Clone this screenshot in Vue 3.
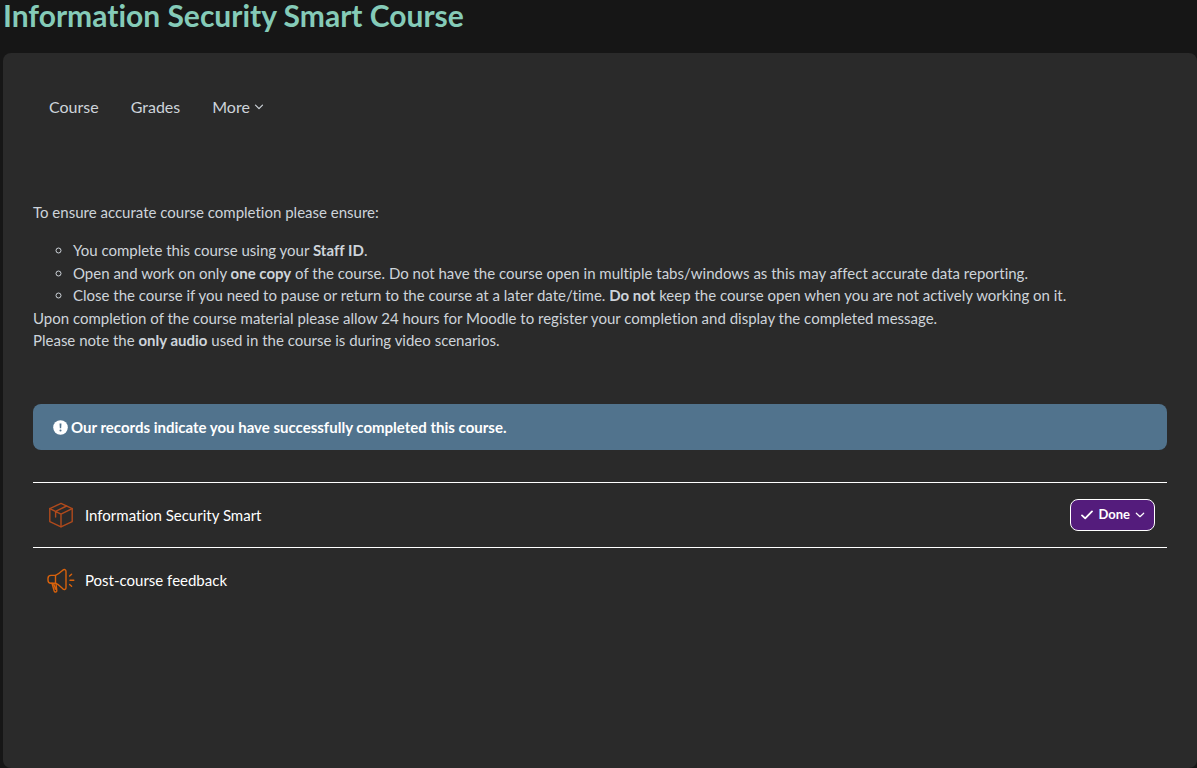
<script setup>
const tabs = ['Course', 'Grades']
</script>

<template>
  <div class="page">
    <h1>Information Security Smart Course</h1>
    <main class="panel">
      <nav class="tabs" aria-label="Course navigation">
        <a v-for="tab in tabs" :key="tab" href="#">{{ tab }}</a>
        <button type="button" class="more">
          More
          <svg class="chevron" viewBox="0 0 10 10" aria-hidden="true"><path d="M1.5 3.2 5 6.7 8.5 3.2" /></svg>
        </button>
      </nav>

      <section class="intro">
        <p class="lead">To ensure accurate course completion please ensure:</p>
        <ul>
          <li>You complete this course using your <strong>Staff ID</strong>.</li>
          <li>Open and work on only <strong>one copy</strong> of the course. Do not have the course open in multiple tabs/windows as this may affect accurate data reporting.</li>
          <li>Close the course if you need to pause or return to the course at a later date/time. <strong>Do not</strong> keep the course open when you are not actively working on it.</li>
        </ul>
        <p>Upon completion of the course material please allow 24 hours for Moodle to register your completion and display the completed message.</p>
        <p>Please note the <strong>only audio</strong> used in the course is during video scenarios.</p>
      </section>

      <div class="notice" role="status">
        <svg viewBox="0 0 16 16" aria-hidden="true">
          <circle cx="8" cy="8" r="7.8" fill="#fff" />
          <path d="M7 3.6h2l-.3 5.2H7.3z" fill="#51738d" />
          <circle cx="8" cy="11.2" r="1.1" fill="#51738d" />
        </svg>
        <span>Our records indicate you have successfully completed this course.</span>
      </div>

      <ul class="activities">
        <li>
          <svg class="icon package" viewBox="0 0 28 28" aria-hidden="true">
            <path d="M14 2.4 25.2 7.6v13L14 25.8 2.8 20.6v-13z" />
            <path d="M2.8 7.6 14 13.2 25.2 7.6M14 13.2v12.6M8.600 16v-5.600L19.600 5" />
          </svg>
          <a href="#">Information Security Smart</a>
          <button type="button" class="done">
            <svg class="check" viewBox="0 0 12 12" aria-hidden="true"><path d="M1 6.4 4.2 9.4 11 2.4" /></svg>
            Done
            <svg class="chevron" viewBox="0 0 10 10" aria-hidden="true"><path d="M1.3 3.2 5 6.7 8.7 3.2" /></svg>
          </button>
        </li>
        <li>
          <svg class="icon horn" viewBox="0 0 28 28" aria-hidden="true">
            <path d="M8.500 9.400H4A3 3 0 0 0 1 12.400v1.800a3 3 0 0 0 3 3h4.500z" />
            <path d="M8.500 9.400c3.200-1 5-3.200 7.200-5.200 1.600-1.400 3.300-.8 3.300 1.400v15.800c0 2.200-1.700 2.800-3.300 1.400-2.200-2-4-4.400-7.200-5.600" />
            <path d="M5 17.200 7.200 25c.5 1.500 2.800 1.300 2.600-.4L9 17.500M6.600 17.600l2 5.600" />
            <path d="M23 14.200h3.800M22.600 10l2-1.800M22.600 18.400l2 1.800" />
          </svg>
          <a href="#">Post-course feedback</a>
        </li>
      </ul>
    </main>
  </div>
</template>

<style>
html,
body {
  margin: 0;
  background: #161616;
}
</style>

<style scoped>
* {
  box-sizing: border-box;
}
.page {
  min-height: 100vh;
  display: flex;
  flex-direction: column;
  padding-left: 3px;
  background: #161616;
  color: #ced4da;
  font: 15px/1.5 Lato, sans-serif;
  font-variant-ligatures: none;
}
h1 {
  margin: 0;
  padding-bottom: 23px;
  color: #85cbb8;
  font-size: 30px;
  line-height: 30px;
  font-weight: 700;
}
.panel {
  flex: 1;
  padding: 30px;
  border-radius: 8px;
  background: #2a2a2a;
}
a {
  color: inherit;
  text-decoration: none;
}
button {
  font: inherit;
  color: inherit;
  cursor: pointer;
}
.tabs {
  display: flex;
  align-items: center;
  height: 48px;
  font-size: 16px;
}
.tabs a,
.more {
  padding: 0 16px;
}
.more {
  display: flex;
  align-items: center;
  gap: 4px;
  border: 0;
  background: none;
}
.chevron {
  width: 10px;
  height: 10px;
  fill: none;
  stroke: currentColor;
  stroke-width: 1.2;
  stroke-linecap: round;
  stroke-linejoin: round;
}
.intro {
  min-height: 151px;
  margin-top: 70px;
}
.intro p {
  margin: 0;
}
.intro .lead {
  margin-bottom: 15px;
  line-height: 23px;
}
.intro ul {
  margin: 0;
  padding-left: 40px;
  list-style: circle;
}
.notice {
  display: flex;
  align-items: center;
  gap: 3px;
  margin-top: 52px;
  height: 46px;
  padding: 0 20px;
  border-radius: 8px;
  background: #51738d;
  color: #fff;
  font-weight: 700;
}
.notice svg {
  width: 15px;
  height: 15px;
}
.activities {
  margin: 32px 0 0;
  padding: 0;
  list-style: none;
}
.activities li {
  display: flex;
  align-items: center;
  height: 65px;
  padding: 0 12px 0 14px;
  border-top: 1px solid #fff;
  color: #fff;
}
.icon {
  width: 28px;
  height: 28px;
  margin-right: 10px;
  fill: none;
  stroke-linecap: round;
  stroke-linejoin: round;
}
.package {
  stroke: #b04a1c;
  stroke-width: 1.4;
}
.horn {
  stroke: #d9620c;
  stroke-width: 1.4;
}
.done {
  display: flex;
  align-items: center;
  gap: 5px;
  height: 32px;
  margin-left: auto;
  padding: 0 9px 0 10px;
  border: 1px solid #fff;
  border-radius: 8px;
  background: #541c7c;
  font-size: 13px;
  font-weight: 700;
}
.check {
  width: 12px;
  height: 12px;
  fill: none;
  stroke: currentColor;
  stroke-width: 1.8;
  stroke-linecap: round;
  stroke-linejoin: round;
}
</style>
